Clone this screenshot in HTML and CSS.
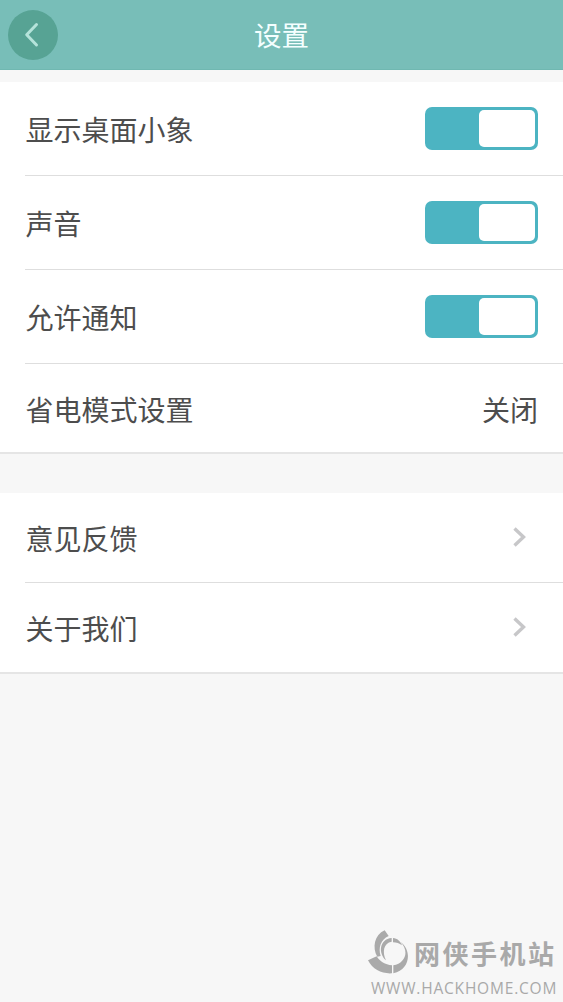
FILE: index.html
```html
<!DOCTYPE html>
<html lang="zh-CN">
<head>
<meta charset="utf-8">
<title>设置</title>
<link rel="stylesheet" href="styles.css">
</head>
<body>
<div class="screen">
  <header class="topbar">
    <button class="back" aria-label="返回"><svg width="50" height="50" viewBox="0 0 50 50"><path d="M28.5 14.500 18.700 24.700 28.500 35"/></svg></button>
    <h1 class="title">设置</h1>
  </header>
  <main>
    <section class="group">
      <div class="row tall"><span>显示桌面小象</span><span class="switch"><i class="knob"></i></span></div>
      <div class="row tall"><span>声音</span><span class="switch"><i class="knob"></i></span></div>
      <div class="row tall"><span>允许通知</span><span class="switch"><i class="knob"></i></span></div>
      <div class="row"><span>省电模式设置</span><span>关闭</span></div>
    </section>
    <section class="group">
      <div class="row"><span>意见反馈</span><svg class="chevron" width="14" height="20" viewBox="0 0 14 20"><path d="M1.5 1.500 10.500 10 1.500 18.500"/></svg></div>
      <div class="row"><span>关于我们</span><svg class="chevron" width="14" height="20" viewBox="0 0 14 20"><path d="M1.5 1.500 10.500 10 1.500 18.500"/></svg></div>
    </section>
  </main>
  <footer class="brand">
    <div class="brand-top">
      <svg class="logo" width="42" height="44" viewBox="12 28 126 132">
        <path d="M65 29 77 46C53 56 45 82 53 106L43 108C27 82 34 42 65 29Z"/>
        <path d="M15 119 41 107C51 123 66 132 87 134V158C57 160 29 147 15 119Z"/>
        <path d="M91 158V134C126 128 141 92 112 64C147 86 143 148 91 158Z"/>
        <path d="M86 52V63C62 66 57 94 69 119C45 98 49 55 86 52Z"/>
        <path d="M90 52C103 53 112 61 117 74C109 68 101 65 90 65Z"/>
      </svg>
      <span class="brand-name">网侠手机站</span>
    </div>
    <div class="brand-url">WWW.HACKHOME.COM</div>
  </footer>
</div>
</body>
</html>
```
FILE: styles.css
```css
* { box-sizing: border-box; }
body { margin: 0; background: #f7f7f7; }
.screen {
  width: 563px;
  height: 1002px;
  display: flex;
  flex-direction: column;
  overflow: hidden;
  background: #f7f7f7;
  color: #4d4d4d;
  font-family: "Noto Sans CJK SC", sans-serif;
  font-size: 28px;
  line-height: 40px;
}
.topbar {
  height: 70px;
  display: grid;
  grid-template-columns: 66px 1fr 66px;
  align-items: center;
  background: #78beb8;
  border-bottom: 1px solid #70b8b1;
}
.back {
  width: 50px;
  height: 50px;
  margin-left: 8px;
  padding: 0;
  border: 0;
  border-radius: 50%;
  background: #57a394;
}
.back svg { display: block; fill: none; stroke: #b5e3da; stroke-width: 3; stroke-linecap: round; stroke-linejoin: round; }
.title {
  margin: 0;
  padding-bottom: 1px;
  text-align: center;
  color: #f4ffff;
  font-size: 27.5px;
  font-weight: 400;
}
.group {
  margin-top: 12px;
  background: #fff;
  border-bottom: 2px solid #e5e5e5;
}
.group + .group { margin-top: 39px; }
.row {
  height: 90px;
  margin-left: 25px;
  padding-right: 25px;
  display: flex;
  align-items: center;
  justify-content: space-between;
}
.row > span:first-child { padding-left: 0.6px; }
.row.tall { height: 94px; }
.row:not(:last-child) { border-bottom: 1px solid #dedede; }
.row:last-child { height: 89px; }
.group:first-child .row:last-child { height: 88px; padding-top: 2px; }
.switch {
  width: 113px;
  height: 43px;
  padding: 3px;
  display: flex;
  justify-content: flex-end;
  border-radius: 7px;
  background: #4cb4c2;
}
.knob { width: 56px; height: 37px; border-radius: 5px; background: #fff; }
.chevron { margin: 0 11px 2px 0; fill: none; stroke: #c7c7c9; stroke-width: 3.4; }
.brand {
  width: 196px;
  margin: auto 0 0 auto;
  color: #a9a9a9;
}
.brand-top { height: 44px; display: flex; align-items: center; }
.logo { fill: #aaa; }
.brand-name { margin-left: 5px; padding-top: 1px; font-size: 26px; font-weight: 700; line-height: 40px; letter-spacing: 2.5px; white-space: nowrap; }
.brand-url {
  margin-left: 4px;
  font-family: "Open Sans", sans-serif;
  font-size: 15.5px;
  font-weight: 500;
  line-height: 28px;
  letter-spacing: 0.8px;
  white-space: nowrap;
}
```
